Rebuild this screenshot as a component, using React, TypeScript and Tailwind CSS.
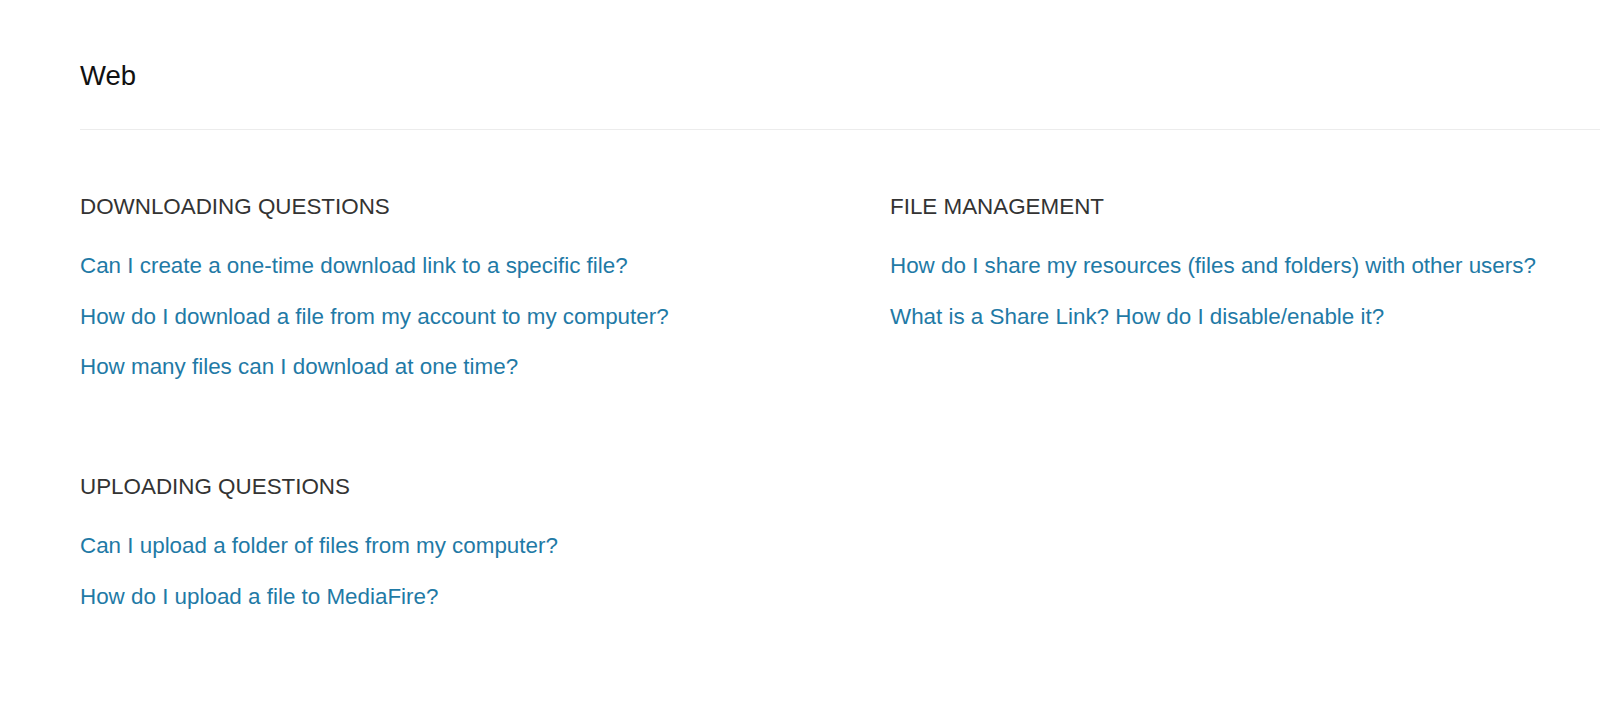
import React from "react";

type Section = { title: string; links: string[] };

const left: Section[] = [
  {
    title: "DOWNLOADING QUESTIONS",
    links: [
      "Can I create a one-time download link to a specific file?",
      "How do I download a file from my account to my computer?",
      "How many files can I download at one time?",
    ],
  },
  {
    title: "UPLOADING QUESTIONS",
    links: [
      "Can I upload a folder of files from my computer?",
      "How do I upload a file to MediaFire?",
    ],
  },
];

const right: Section[] = [
  {
    title: "FILE MANAGEMENT",
    links: [
      "How do I share my resources (files and folders) with other users?",
      "What is a Share Link? How do I disable/enable it?",
    ],
  },
];

const SectionBlock = ({ section }: { section: Section }) => (
  <section>
    <h3 className="text-[22.4px] leading-[30px] text-[#333333]">{section.title}</h3>
    <ul className="mt-[29px] flex flex-col gap-[20.5px]">
      {section.links.map((l) => (
        <li key={l}>
          <a href="#" className="text-[22.4px] leading-[30px] text-[#1f7aa6] hover:underline">
            {l}
          </a>
        </li>
      ))}
    </ul>
  </section>
);

export default function App() {
  return (
    <div
      className="min-h-[718px] bg-white pl-[80px]"
      style={{ fontFamily: '"Liberation Sans", Arial, sans-serif' }}
    >
      <h1 className="pt-[58px] pb-[35px] text-[27.5px] leading-[36px] text-[#111111]">Web</h1>
      <div className="h-px bg-[#ececec]" />
      <div className="mt-[62px] grid grid-cols-[810px_1fr]">
        <div className="flex flex-col gap-[90px]">
          {left.map((s) => (
            <SectionBlock key={s.title} section={s} />
          ))}
        </div>
        <div className="flex flex-col gap-[90px]">
          {right.map((s) => (
            <SectionBlock key={s.title} section={s} />
          ))}
        </div>
      </div>
    </div>
  );
}
